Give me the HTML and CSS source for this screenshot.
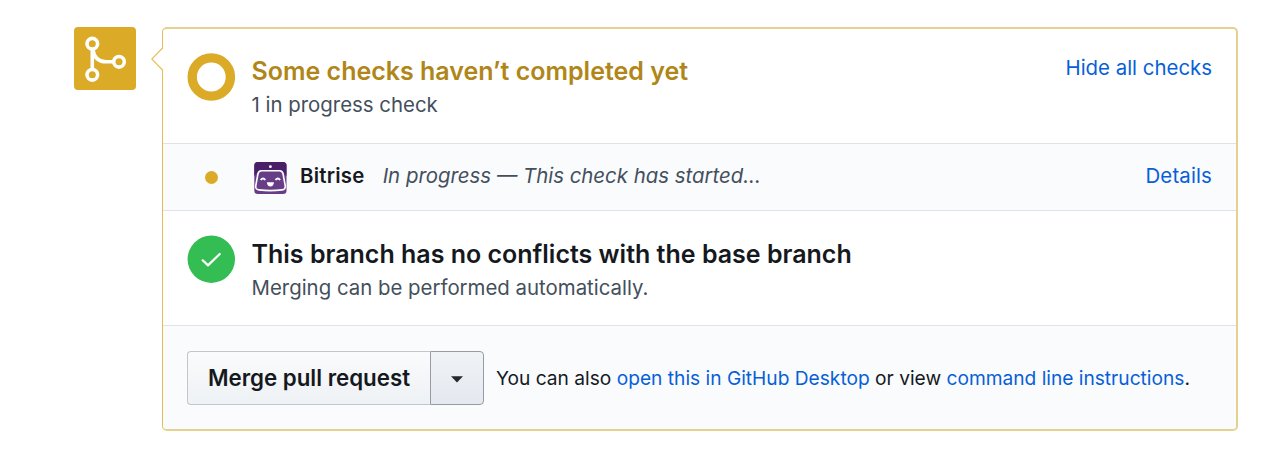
FILE: index.html
```html
<!DOCTYPE html>
<html lang="en">
<head>
<meta charset="utf-8">
<title>Merge status</title>
<link rel="stylesheet" href="styles.css">
</head>
<body>
<main class="timeline">
  <div class="merge-badge">
    <svg width="62" height="62" viewBox="0 0 62 62" fill="none" stroke="#fff" stroke-width="3.6">
      <circle cx="18.3" cy="16.7" r="5.3"/><circle cx="18.3" cy="47.8" r="5.3"/><circle cx="45" cy="34.8" r="5.3"/>
      <path d="M18.3 22V42.500M18.800 22C20 31 25 34.800 32 34.800H39.500"/>
    </svg>
  </div>
  <section class="panel">
    <svg class="pointer" width="13" height="24" viewBox="0 0 13 24"><path class="pointer-fill" d="M13 0L1 12L13 24Z"/><path class="pointer-line" d="M12 .5L.8 12L12 23.5"/></svg>
    <div class="status">
      <svg class="status-icon" width="48" height="48" viewBox="0 0 48 48"><circle cx="24.3" cy="24" r="19.1" fill="none" stroke="#dbab27" stroke-width="9.4"/></svg>
      <div class="status-copy">
        <h2 class="title title-pending">Some checks haven’t completed yet</h2>
        <p class="subtitle">1 in progress check</p>
      </div>
      <a class="link hide-link">Hide all checks</a>
    </div>
    <div class="check">
      <span class="dot"></span>
      <svg class="app-icon" width="33" height="32" viewBox="0 0 33 32">
        <rect x=".3" width="32.2" height="32" rx="3.5" fill="#683d87"/>
        <path d="M.3 14V3.500Q.3 0 3.800 0H29Q32.500 0 32.500 3.500V14L28 8.500H5Z" fill="#492067"/>
        <path d="M7.500 8.800H25.500Q28.600 8.800 29.100 12L31.200 23.700Q31.700 27.500 28 27.900Q16.400 29.300 4.800 27.900Q1.200 27.500 1.800 23.700L3.900 12Q4.500 8.800 7.500 8.800Z" fill="#683d87" stroke="#fff" stroke-width="1.600"/>
        <circle cx="16.400" cy="4.700" r="1.400" fill="#fff"/>
        <path d="M6.700 18Q9 15 11.300 18M21.500 18Q23.800 15 26.100 18" fill="none" stroke="#fff" stroke-width="1.800"/>
        <path d="M12.800 20.300H20Q19.500 24.500 16.400 24.500T12.800 20.300Z" fill="#fff"/>
      </svg>
      <strong class="app-name">Bitrise</strong>
      <em class="check-text">In progress — This check has started...</em>
      <a class="link details-link">Details</a>
    </div>
    <div class="status status-mergeable">
      <svg class="status-icon" width="48" height="48" viewBox="0 0 48 48"><circle cx="24.3" cy="24.2" r="23.7" fill="#34bd53"/><path d="M15.700 25.300L21 30.400L32.700 19" fill="none" stroke="#fff" stroke-width="2.200" stroke-linecap="round" stroke-linejoin="round"/></svg>
      <div class="status-copy">
        <h2 class="title">This branch has no conflicts with the base branch</h2>
        <p class="subtitle">Merging can be performed automatically.</p>
      </div>
    </div>
    <div class="actions">
      <div class="button-group">
        <button class="merge-button"><span>Merge pull request</span></button>
        <button class="menu-button" aria-label="Select merge method"><svg class="caret" width="12" height="7" viewBox="0 0 12 7"><path d="M0 .3H12L6 6.500Z" fill="#24292e"/></svg></button>
      </div>
      <p class="hint">You can also <a class="link">open this in GitHub Desktop</a> or view <a class="link">command line instructions</a>.</p>
    </div>
  </section>
</main>
</body>
</html>
```
FILE: styles.css
```css
* { box-sizing: border-box; }
body { margin: 0; width: 1265px; height: 450px; overflow: hidden; background: #fff; color: #15191e; font: 20.4px/30px Inter, sans-serif; }
h2, p { margin: 0; white-space: nowrap; }
.timeline { display: flex; align-items: flex-start; gap: 26px; padding: 27px 0 0 74px; }
.merge-badge { width: 62px; height: 62.5px; border-radius: 4px; background: #dbab27; flex: none; }
.merge-badge svg { display: block; }
.panel { position: relative; width: 1076px; height: 404px; border: 2px solid #e5d18e; border-left: 1px solid #e4bf50; border-radius: 5px; background: #fff; }
.pointer { position: absolute; left: -12px; top: 18px; }
.pointer-fill { fill: #fff; }
.pointer-line { fill: none; stroke: #e3c362; stroke-width: 1.3; }
.status { display: flex; height: 115px; padding: 24px 24px 0; border-bottom: 1px solid #dfe2e6; }
.status-icon { display: block; flex: none; }
.status-copy { margin-left: 16.5px; padding-top: 3px; }
.status-mergeable .status-copy { padding-top: 4px; }
.title { font-size: 25px; line-height: 30px; font-weight: 600; }
.title-pending { color: #b08618; }
.subtitle { margin-top: 4px; color: #444f5c; }
.link { color: #075fd8; }
.hide-link { margin-left: auto; }
.check { display: flex; align-items: center; height: 67px; padding: 0 24px 3px; background: #fafbfd; border-bottom: 1px solid #dfe2e6; }
.dot { width: 13px; height: 13px; margin: 4px 36px 0 18px; border-radius: 50%; background: #dbab27; }
.app-icon { margin-top: 5px; margin-right: 13px; }
.app-name { font-weight: 600; letter-spacing: 0.25px; }
.check-text { margin-left: 18px; color: #444f5c; }
.details-link { margin-left: auto; letter-spacing: 0.15px; }
.actions { display: flex; align-items: center; height: 103px; padding: 0 24px; background: #fafbfd; border-radius: 0 0 4px 4px; }
.button-group { display: flex; height: 54px; }
.button-group button { display: flex; align-items: center; justify-content: center; padding: 0; font: 600 22.3px/30px Inter, sans-serif; color: #15191e; }
.merge-button { width: 243px; border: 1px solid #c3c7cc; border-right: 0; border-radius: 4px 0 0 4px; background: linear-gradient(#fafbfc, #eef1f5); white-space: nowrap; }
.menu-button { width: 54px; border: 1px solid #979ca3; border-radius: 0 4px 4px 0; background: linear-gradient(#f0f3f6, #e4e8ef); }
.caret { margin-top: 3px; }
.hint { margin-left: 12px; font-size: 19.17px; }
```
